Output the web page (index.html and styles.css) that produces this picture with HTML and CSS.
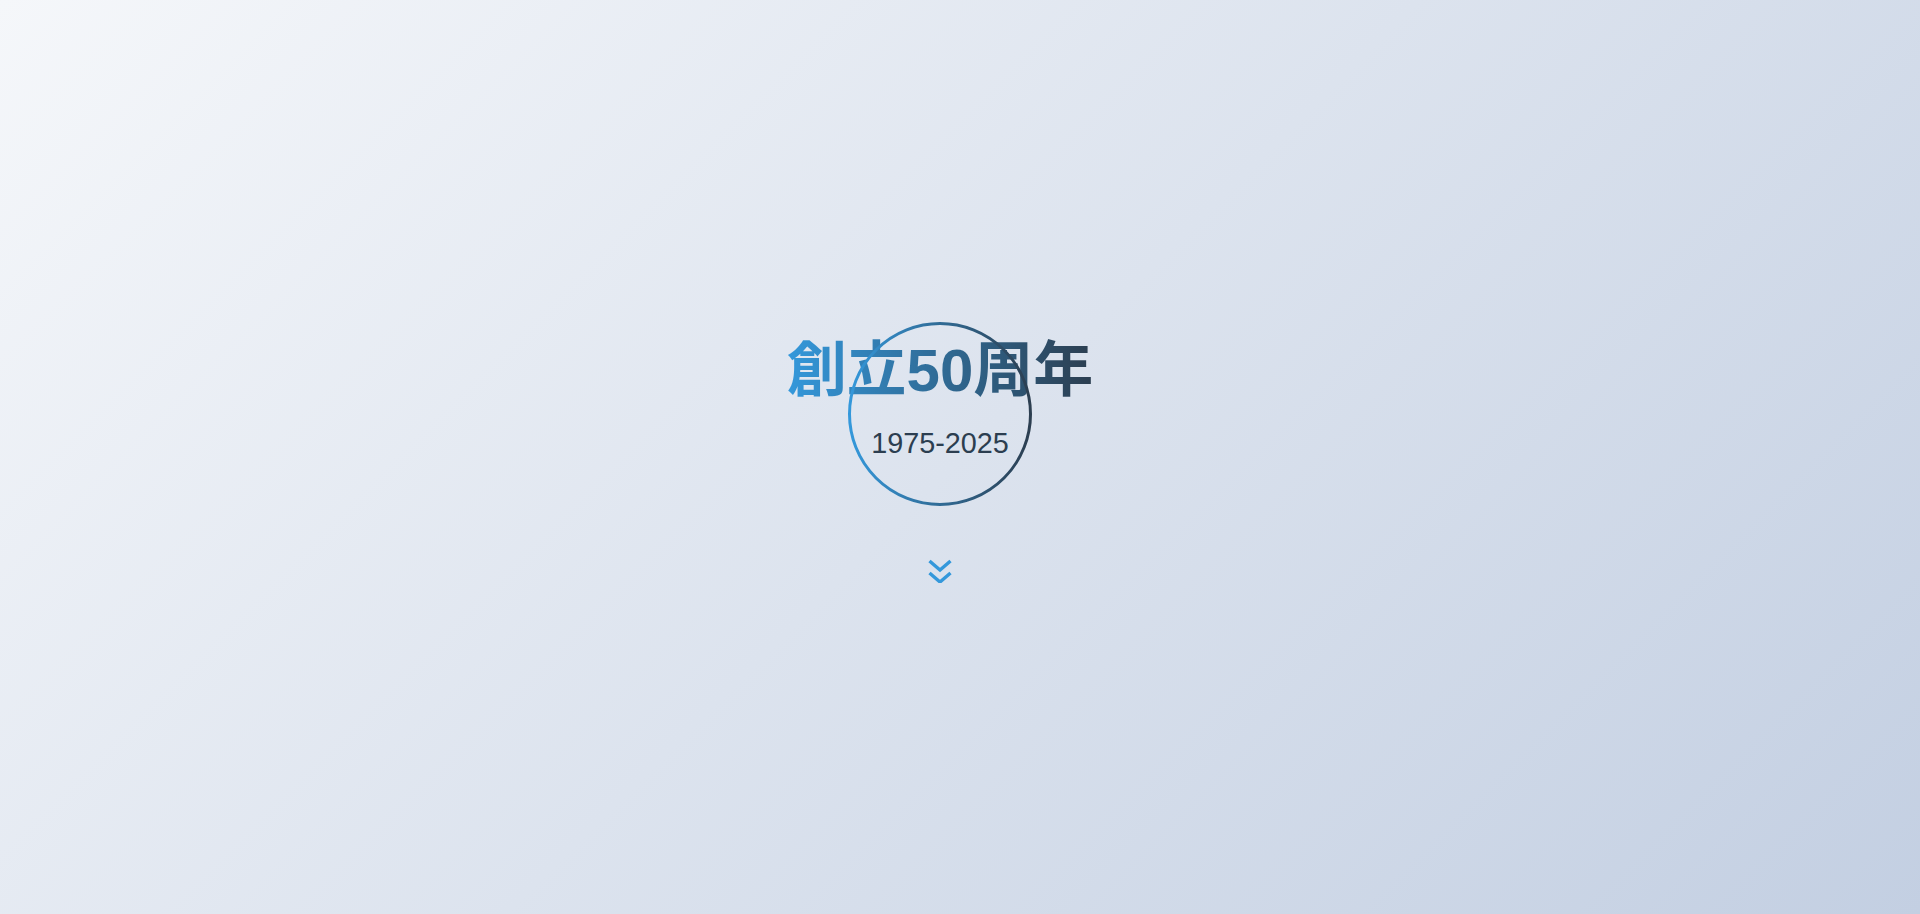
FILE: index.html
```html
<!DOCTYPE html>
<html lang="ja">
<head>
<meta charset="utf-8">
<title>創立50周年 1975-2025</title>
<link rel="stylesheet" href="styles.css">
</head>
<body>
<header class="hero">
  <div class="hero-inner">
    <div class="emblem">
      <h1 class="hero-title">創立50周年</h1>
      <p class="hero-years">1975-2025</p>
      <svg class="emblem-ring" viewBox="0 0 184 184" aria-hidden="true">
        <defs>
          <linearGradient id="ringGrad" x1="0" y1="0" x2="1" y2="0">
            <stop offset="0" stop-color="#3498db"/>
            <stop offset="1" stop-color="#2c3e50"/>
          </linearGradient>
        </defs>
        <circle cx="92" cy="92" r="90.5" fill="none" stroke="url(#ringGrad)" stroke-width="3"/>
      </svg>
    </div>
    <div class="scroll-hint" aria-label="scroll">
      <svg viewBox="0 0 24 24" width="24" height="24">
        <path d="M1.5 2 L12 11 L22.5 2 M1.5 14 L12 23 L22.5 14" fill="none" stroke="#3498db" stroke-width="3.4" stroke-linecap="butt" stroke-linejoin="miter"/>
      </svg>
    </div>
  </div>
</header>
<main class="chapters">
  <section class="chapter"></section>
  <section class="chapter"></section>
  <section class="chapter"></section>
  <section class="chapter"></section>
  <section class="chapter"></section>
  <section class="chapter"></section>
  <section class="chapter"></section>
</main>
</body>
</html>
```

FILE: styles.css
```css
html, body {
  margin: 0;
  padding: 0;
}

body {
  font-family: "Liberation Sans", "Noto Sans CJK JP", sans-serif;
  color: #2c3e50;
  background: #f5f7fa;
}

.hero {
  height: 100vh;
  background: linear-gradient(135deg, #f5f7fa 0%, #c3cfe2 100%);
  display: flex;
  align-items: center;
  justify-content: center;
  padding-right: 40px;
  box-sizing: border-box;
}

.hero-inner {
  display: flex;
  flex-direction: column;
  align-items: center;
}

.emblem {
  position: relative;
  display: flex;
  flex-direction: column;
  align-items: center;
}

.hero-title {
  margin: 4px 0 0;
  font-size: 60px;
  font-weight: 700;
  line-height: 1.2;
  background: linear-gradient(90deg, #3498db 0%, #2c3e50 100%);
  -webkit-background-clip: text;
  background-clip: text;
  color: transparent;
}

.hero-years {
  margin: 19px 0 0;
  font-size: 28.8px;
  line-height: 1.2;
  color: #2c3e50;
}

.emblem-ring {
  position: absolute;
  left: 50%;
  top: -9px;
  width: 184px;
  height: 184px;
  margin-left: -92px;
}

.scroll-hint {
  margin-top: 99px;
  width: 24px;
  height: 24px;
}

.scroll-hint svg {
  display: block;
}

.chapter {
  height: 100vh;
  background: #f5f7fa;
}
```
